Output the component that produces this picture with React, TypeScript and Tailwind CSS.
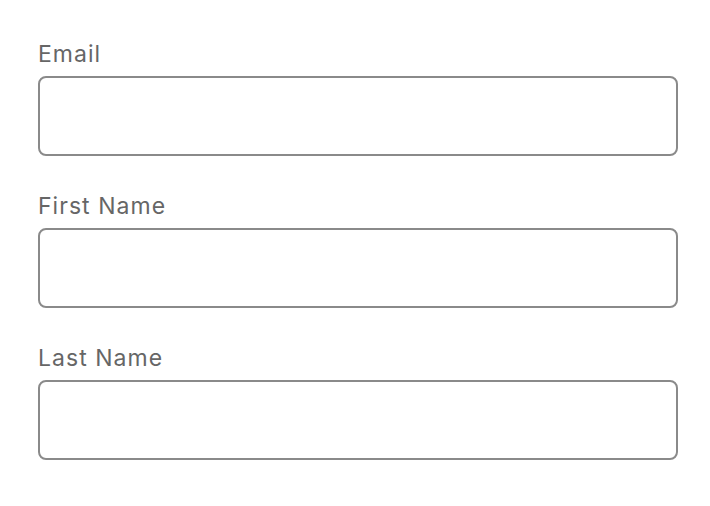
// Simple contact form: three labelled text fields.

const FIELDS = [
  { id: 'email', label: 'Email', type: 'email' },
  { id: 'first-name', label: 'First Name', type: 'text' },
  { id: 'last-name', label: 'Last Name', type: 'text' },
]

export default function App() {
  return (
    <div className="min-h-screen bg-white px-[38px] pt-[40px]" style={{ fontFamily: 'Inter, "Liberation Sans", sans-serif' }}>
      <form className="flex flex-col gap-[36px]">
        {FIELDS.map((f) => (
          <div key={f.id} className="flex flex-col gap-[8px]">
            <label htmlFor={f.id} className="text-[23px] leading-[28px] tracking-[0.045em] text-[#666666]">
              {f.label}
            </label>
            <input
              id={f.id}
              type={f.type}
              className="h-[80px] w-[640px] rounded-[8px] border-2 border-[#8a8a8a] bg-white px-4 text-[22px] outline-none"
            />
          </div>
        ))}
      </form>
    </div>
  )
}
